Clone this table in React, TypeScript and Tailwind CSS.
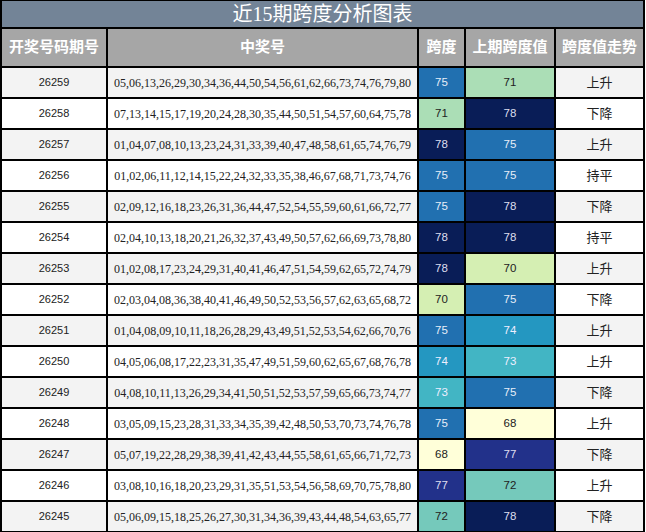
import React from 'react';

type Row = {
    issue: string;
    nums: string;
    span: number;
    prev: number;
    trend: string;
};

const rows: Row[] = [
    { issue: '26259', nums: '05,06,13,26,29,30,34,36,44,50,54,56,61,62,66,73,74,76,79,80', span: 75, prev: 71, trend: '上升' },
    { issue: '26258', nums: '07,13,14,15,17,19,20,24,28,30,35,44,50,51,54,57,60,64,75,78', span: 71, prev: 78, trend: '下降' },
    { issue: '26257', nums: '01,04,07,08,10,13,23,24,31,33,39,40,47,48,58,61,65,74,76,79', span: 78, prev: 75, trend: '上升' },
    { issue: '26256', nums: '01,02,06,11,12,14,15,22,24,32,33,35,38,46,67,68,71,73,74,76', span: 75, prev: 75, trend: '持平' },
    { issue: '26255', nums: '02,09,12,16,18,23,26,31,36,44,47,52,54,55,59,60,61,66,72,77', span: 75, prev: 78, trend: '下降' },
    { issue: '26254', nums: '02,04,10,13,18,20,21,26,32,37,43,49,50,57,62,66,69,73,78,80', span: 78, prev: 78, trend: '持平' },
    { issue: '26253', nums: '01,02,08,17,23,24,29,31,40,41,46,47,51,54,59,62,65,72,74,79', span: 78, prev: 70, trend: '上升' },
    { issue: '26252', nums: '02,03,04,08,36,38,40,41,46,49,50,52,53,56,57,62,63,65,68,72', span: 70, prev: 75, trend: '下降' },
    { issue: '26251', nums: '01,04,08,09,10,11,18,26,28,29,43,49,51,52,53,54,62,66,70,76', span: 75, prev: 74, trend: '上升' },
    { issue: '26250', nums: '04,05,06,08,17,22,23,31,35,47,49,51,59,60,62,65,67,68,76,78', span: 74, prev: 73, trend: '上升' },
    { issue: '26249', nums: '04,08,10,11,13,26,29,34,41,50,51,52,53,57,59,65,66,73,74,77', span: 73, prev: 75, trend: '下降' },
    { issue: '26248', nums: '03,05,09,15,23,28,31,33,34,35,39,42,48,50,53,70,73,74,76,78', span: 75, prev: 68, trend: '上升' },
    { issue: '26247', nums: '05,07,19,22,28,29,38,39,41,42,43,44,55,58,61,65,66,71,72,73', span: 68, prev: 77, trend: '下降' },
    { issue: '26246', nums: '03,08,10,16,18,20,23,29,31,35,51,53,54,56,58,69,70,75,78,80', span: 77, prev: 72, trend: '上升' },
    { issue: '26245', nums: '05,06,09,15,18,25,26,27,30,31,34,36,39,43,44,48,54,63,65,77', span: 72, prev: 78, trend: '下降' },
];

// heat colours for span values (YlGnBu-like)
const heat: Record<number, string> = {
    68: 'bg-[#ffffd9] text-[#222]',
    70: 'bg-[#d5efb3] text-[#222]',
    71: 'bg-[#abdeb6] text-[#222]',
    72: 'bg-[#75c9bb] text-[#222]',
    73: 'bg-[#42b5c4] text-[#eef]',
    74: 'bg-[#2497c1] text-[#eef]',
    75: 'bg-[#2170b0] text-[#e6eef8]',
    77: 'bg-[#22318a] text-[#dde]',
    78: 'bg-[#091d57] text-[#dde]',
};

const sans = "font-['Liberation_Sans','Noto_Sans_CJK_SC',sans-serif]";
const serif = "font-['Liberation_Serif','Noto_Sans_CJK_SC',serif]";

export default function App() {
    return (
        <div className="w-[646px] h-[532px] bg-white">
            <div className="w-[645px] bg-black pt-[1px] px-[2px] pb-[1px] grid grid-cols-[104px_309px_45px_88px_87px] gap-[2px]">
                <div className={`col-span-5 h-[26px] bg-[#738497] text-white text-[20px] leading-[26px] text-center ${serif}`}>
                    近15期跨度分析图表
                </div>

                {['开奖号码期号', '中奖号', '跨度', '上期跨度值', '跨度值走势'].map((h) => (
                    <div
                        key={h}
                        className={`h-[37px] bg-[#a6a6a6] text-white font-bold text-[15px] flex items-center justify-center ${sans}`}
                    >
                        {h}
                    </div>
                ))}

                {rows.map((r, i) => {
                    const stripe = i % 2 === 0 ? 'bg-[#f3f3f3]' : 'bg-white';
                    return (
                        <React.Fragment key={r.issue}>
                            <div className={`h-[29px] ${stripe} text-[#222] text-[11px] flex items-center justify-center ${sans}`}>
                                {r.issue}
                            </div>
                            <div className={`h-[29px] ${stripe} text-[#222] text-[12px] flex items-center justify-center ${serif}`}>
                                {r.nums}
                            </div>
                            <div className={`h-[29px] ${heat[r.span]} text-[11.5px] flex items-center justify-center ${sans}`}>
                                {r.span}
                            </div>
                            <div className={`h-[29px] ${heat[r.prev]} text-[11.5px] flex items-center justify-center ${sans}`}>
                                {r.prev}
                            </div>
                            <div className={`h-[29px] ${stripe} text-[#222] text-[13px] flex items-center justify-center ${sans}`}>
                                {r.trend}
                            </div>
                        </React.Fragment>
                    );
                })}
            </div>
        </div>
    );
}
